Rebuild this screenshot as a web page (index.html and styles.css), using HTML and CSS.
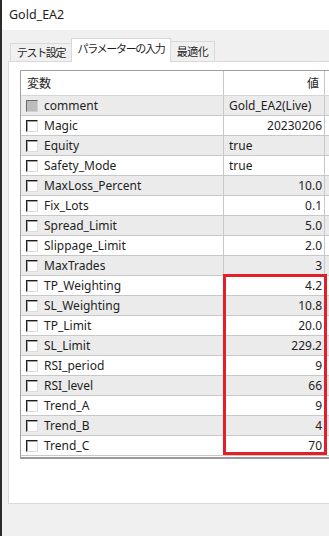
FILE: index.html
```html
<!DOCTYPE html>
<html lang="ja">
<head>
    <meta charset="UTF-8">
    <meta name="viewport" content="width=device-width, initial-scale=1.0">
    <title>Gold_EA2</title>
    <link rel="stylesheet" href="styles.css">
</head>
<body>
    <div class="titlebar">Gold_EA2</div>

    <div class="tabs">
        <div class="tab tab-test">テスト設定</div>
        <div class="tab tab-active">パラメーターの入力</div>
        <div class="tab tab-opt">最適化</div>
    </div>

    <div class="panel">
        <div class="grid">
            <div class="row header">
                <div class="cell name">変数</div>
                <div class="cell value">値</div>
                <div class="cell extra"></div>
            </div>
            <div class="row alt">
                <div class="cell name"><span class="check disabled"></span>comment</div>
                <div class="cell value left">Gold_EA2(Live)</div>
                <div class="cell extra"></div>
            </div>
            <div class="row">
                <div class="cell name"><span class="check"></span>Magic</div>
                <div class="cell value">20230206</div>
                <div class="cell extra"></div>
            </div>
            <div class="row alt">
                <div class="cell name"><span class="check"></span>Equity</div>
                <div class="cell value left">true</div>
                <div class="cell extra"></div>
            </div>
            <div class="row">
                <div class="cell name"><span class="check"></span>Safety_Mode</div>
                <div class="cell value left">true</div>
                <div class="cell extra"></div>
            </div>
            <div class="row alt">
                <div class="cell name"><span class="check"></span>MaxLoss_Percent</div>
                <div class="cell value">10.0</div>
                <div class="cell extra"></div>
            </div>
            <div class="row">
                <div class="cell name"><span class="check"></span>Fix_Lots</div>
                <div class="cell value">0.1</div>
                <div class="cell extra"></div>
            </div>
            <div class="row alt">
                <div class="cell name"><span class="check"></span>Spread_Limit</div>
                <div class="cell value">5.0</div>
                <div class="cell extra"></div>
            </div>
            <div class="row">
                <div class="cell name"><span class="check"></span>Slippage_Limit</div>
                <div class="cell value">2.0</div>
                <div class="cell extra"></div>
            </div>
            <div class="row alt">
                <div class="cell name"><span class="check"></span>MaxTrades</div>
                <div class="cell value">3</div>
                <div class="cell extra"></div>
            </div>
            <div class="row">
                <div class="cell name"><span class="check"></span>TP_Weighting</div>
                <div class="cell value">4.2</div>
                <div class="cell extra"></div>
            </div>
            <div class="row alt">
                <div class="cell name"><span class="check"></span>SL_Weighting</div>
                <div class="cell value">10.8</div>
                <div class="cell extra"></div>
            </div>
            <div class="row">
                <div class="cell name"><span class="check"></span>TP_Limit</div>
                <div class="cell value">20.0</div>
                <div class="cell extra"></div>
            </div>
            <div class="row alt">
                <div class="cell name"><span class="check"></span>SL_Limit</div>
                <div class="cell value">229.2</div>
                <div class="cell extra"></div>
            </div>
            <div class="row">
                <div class="cell name"><span class="check"></span>RSI_period</div>
                <div class="cell value">9</div>
                <div class="cell extra"></div>
            </div>
            <div class="row alt">
                <div class="cell name"><span class="check"></span>RSI_level</div>
                <div class="cell value">66</div>
                <div class="cell extra"></div>
            </div>
            <div class="row">
                <div class="cell name"><span class="check"></span>Trend_A</div>
                <div class="cell value">9</div>
                <div class="cell extra"></div>
            </div>
            <div class="row alt">
                <div class="cell name"><span class="check"></span>Trend_B</div>
                <div class="cell value">4</div>
                <div class="cell extra"></div>
            </div>
            <div class="row">
                <div class="cell name"><span class="check"></span>Trend_C</div>
                <div class="cell value">70</div>
                <div class="cell extra"></div>
            </div>

            <!-- highlight drawn over the edited values -->
            <div class="highlight"></div>
        </div>
    </div>
</body>
</html>
```

FILE: styles.css
```css
body {
    margin: 0;
    width: 327px;
    height: 536px;
    overflow: hidden;
    background-color: #f0f0f0;
    border-left: 2px solid #2b2b2b;
    font-family: 'Noto Sans', 'Noto Sans CJK JP', sans-serif;
    font-size: 12px;
    color: #1e1e1e;
}
.titlebar {
    height: 30px;
    line-height: 30px;
    padding-left: 7px;
    background-color: white;
    font-size: 12.5px;
}
.tabs {
    display: flex;
    align-items: flex-end;
    height: 23px;
    margin-top: 8px;
    padding-left: 8px;
    position: relative;
    z-index: 1;
}
.tab {
    box-sizing: border-box;
    border: 1px solid #d9d9d9;
    border-bottom: none;
    background-color: #f0f0f0;
    text-align: center;
    white-space: nowrap;
    font-size: 11px;
    letter-spacing: -1.3px;
}
.tab-test {
    width: 61px;
    height: 18px;
    line-height: 17px;
    border-right: none;
}
.tab-active {
    width: 100px;
    height: 24px;
    line-height: 20px;
    margin-bottom: -1px;
    background-color: white;
}
.tab-opt {
    width: 44px;
    height: 20px;
    line-height: 20px;
    border-left: none;
    letter-spacing: -0.5px;
}
.panel {
    margin-left: 6px;
    height: 443px;
    box-sizing: border-box;
    background-color: white;
    border: 1px solid #d9d9d9;
    border-right: none;
    padding: 8px 0 0 11px;
    overflow: hidden;
}
.grid {
    position: relative;
    border-top: 1px solid #a0a0a0;
    border-left: 1px solid #a0a0a0;
    border-bottom: 2px solid #9a9a9a;
    padding-bottom: 1px;
}
.row {
    display: flex;
    height: 19px;
    border-bottom: 1px solid #c8c8c8;
    background-color: white;
}
.row.alt {
    background-color: #ebebeb;
}
.row.header {
    height: 24px;
    border-bottom-color: #d5d5d5;
}
.cell {
    display: flex;
    align-items: center;
    box-sizing: border-box;
    border-right: 1px solid #c8c8c8;
    white-space: nowrap;
}
.name {
    width: 203px;
    padding-left: 5px;
}
.header .name {
    padding-left: 6px;
}
.value {
    width: 101px;
    justify-content: flex-end;
    padding-right: 2px;
}
.header .value {
    padding-right: 5px;
}
.value.left {
    justify-content: flex-start;
    padding-left: 5px;
}
.extra {
    flex: 1;
    border-right: none;
}
.check {
    width: 12px;
    height: 12px;
    box-sizing: border-box;
    margin-right: 6px;
    background-color: white;
    border: 1px solid;
    border-color: #1e1e1e #dcdcdc #dcdcdc #1e1e1e;
    box-shadow: inset 1px 1px 0 #a0a0a0;
}
.check.disabled {
    background-color: #bcbcbc;
    border-color: #6a6a6a #d0d0d0 #d0d0d0 #6a6a6a;
    box-shadow: none;
}
.highlight {
    position: absolute;
    left: 202px;
    top: 203px;
    width: 104px;
    height: 181px;
    box-sizing: border-box;
    border: 3px solid #e3202a;
}
```
